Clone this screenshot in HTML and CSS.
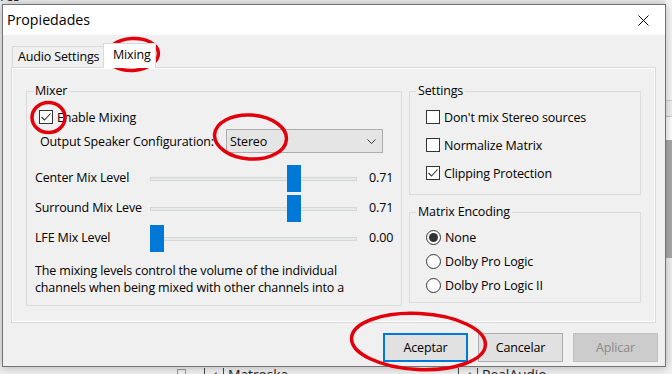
FILE: index.html
```html
<!DOCTYPE html>
<html lang="es">
<head>
<meta charset="utf-8">
<title>Propiedades</title>
<link rel="stylesheet" href="styles.css">
</head>
<body>
<div class="screen">
  <div class="backdrop">
    <span class="bg-frag bg-top">res</span>
    <div class="bg-right"></div>
    <span class="bg-frag bg-box1"></span>
    <span class="bg-frag bg-m"><span class="bg-chk">✓</span>Matroska</span>
    <span class="bg-frag bg-r"><span class="bg-chk">✓</span>RealAudio</span>
  </div>

  <div class="dialog">
    <div class="titlebar">
      <span class="title">Propiedades</span>
      <span class="close">
        <svg width="11" height="11" viewBox="0 0 11 11"><path d="M0.5 0.5 L10.5 10.5 M10.5 0.5 L0.5 10.5" stroke="#000" stroke-width="1" fill="none"/></svg>
      </span>
    </div>
    <div class="body">
      <div class="tabs">
        <div class="tab tab-audio">Audio Settings</div>
        <div class="tab tab-active">Mixing</div>
      </div>
      <div class="panel">
        <fieldset class="group mixer">
          <legend>Mixer</legend>
          <div class="check-row enable">
            <span class="box"><svg width="12" height="12" viewBox="0 0 12 12"><path d="M1.5 6 L4.5 9 L10.5 2.5" stroke="#333" stroke-width="1.1" fill="none"/></svg></span>
            <span>Enable Mixing</span>
          </div>
          <div class="combo-row">
            <span class="combo-label">Output Speaker Configuration:</span>
            <div class="combo">
              <span>Stereo</span>
              <svg width="9" height="5" viewBox="0 0 9 5"><path d="M0.5 0.5 L4.5 4.5 L8.5 0.5" stroke="#333" stroke-width="1" fill="none"/></svg>
            </div>
          </div>
          <div class="slider-row first">
            <span class="slider-label">Center Mix Level</span>
            <div class="track"><div class="track-line"></div><div class="thumb" style="left: calc(0.71 * (100% - 14px));"></div></div>
            <span class="slider-value">0.71</span>
          </div>
          <div class="slider-row">
            <span class="slider-label">Surround Mix Leve</span>
            <div class="track"><div class="track-line"></div><div class="thumb" style="left: calc(0.71 * (100% - 14px));"></div></div>
            <span class="slider-value">0.71</span>
          </div>
          <div class="slider-row">
            <span class="slider-label">LFE Mix Level</span>
            <div class="track"><div class="track-line"></div><div class="thumb" style="left: calc(0 * (100% - 14px));"></div></div>
            <span class="slider-value">0.00</span>
          </div>
          <p class="note">The mixing levels control the volume of the individual channels when being mixed with other channels into a single output speaker.</p>
        </fieldset>

        <div class="right-col">
          <fieldset class="group settings">
            <legend>Settings</legend>
            <div class="opt-row">
              <span class="box"></span><span>Don't mix Stereo sources</span>
            </div>
            <div class="opt-row">
              <span class="box"></span><span>Normalize Matrix</span>
            </div>
            <div class="opt-row">
              <span class="box"><svg width="12" height="12" viewBox="0 0 12 12"><path d="M1.5 6 L4.5 9 L10.5 2.5" stroke="#333" stroke-width="1.1" fill="none"/></svg></span><span>Clipping Protection</span>
            </div>
          </fieldset>
          <fieldset class="group matrix">
            <legend>Matrix Encoding</legend>
            <div class="radio-row">
              <span class="radio on"></span><span>None</span>
            </div>
            <div class="radio-row">
              <span class="radio"></span><span>Dolby Pro Logic</span>
            </div>
            <div class="radio-row">
              <span class="radio"></span><span>Dolby Pro Logic II</span>
            </div>
          </fieldset>
        </div>
      </div>
      <div class="buttons">
        <button class="btn btn-default">Aceptar</button>
        <button class="btn">Cancelar</button>
        <button class="btn btn-disabled">Aplicar</button>
      </div>
    </div>
  </div>

  <svg class="marks" width="672" height="374" viewBox="0 0 672 374">
    <ellipse cx="132.5" cy="54.5" rx="26" ry="16" transform="rotate(-4 132.5 54.5)"/>
    <ellipse cx="48.5" cy="117.5" rx="16.5" ry="15"/>
    <ellipse cx="250.5" cy="137" rx="36" ry="22" transform="rotate(4 250.5 137)"/>
    <ellipse cx="418.5" cy="341.5" rx="67" ry="28" transform="rotate(3 418.5 341.5)"/>
  </svg>
</div>
</body>
</html>
```

FILE: styles.css
```css
* { box-sizing: border-box; }
html, body { margin: 0; padding: 0; }
body {
  font-family: "Open Sans", "Noto Sans", sans-serif;
  font-stretch: 92%;
  font-size: 12.5px;
  letter-spacing: -0.15px;
  color: #000;
  background: #f0f0f0;
}

.screen {
  position: relative;
  width: 672px;
  height: 374px;
  overflow: hidden;
  background: #eeeeee;
}

/* application behind the dialog */
.backdrop { position: absolute; inset: 0; }
.bg-frag { position: absolute; font-size: 14px; line-height: 16px; color: #222; }
.bg-top { left: 0; top: -12px; }
.bg-right {
  position: absolute; left: 665px; top: 0; width: 7px; height: 374px;
  background: linear-gradient(to bottom, #f7f7f7 0 100px, #cfcfcf 100px 101px, #f0f0f0 101px 116px, #c4c4c4 116px 117px, #ffffff 117px 140px, #a9a9a9 140px 258px, #f0f0f0 258px);
}
.bg-box1 { left: 177px; top: 369px; width: 9px; height: 9px; border: 1px solid #9a9a9a; }
.bg-m { left: 204px; top: 367px; }
.bg-r { left: 458px; top: 367px; }
.bg-chk { display: inline-block; width: 20px; border-left: 1px solid #444; border-right: 1px solid #444; text-align: center; margin-right: 4px; font-size: 12px; }

/* dialog window */
.dialog {
  position: absolute;
  left: 2px; top: 4px;
  width: 664px; height: 363px;
  border: 1px solid #737373;
  background: #f0f0f0;
  display: flex;
  flex-direction: column;
  box-shadow: 0 0 9px rgba(0, 0, 0, 0.28);
}
.titlebar {
  height: 30px;
  flex: none;
  background: #fff;
  display: flex;
  align-items: center;
  justify-content: space-between;
}
.title { padding-left: 4px; font-size: 14.2px; letter-spacing: 0; line-height: 30px; }
.close {
  width: 44px; height: 30px;
  display: flex; align-items: center; justify-content: center;
}
.close svg { display: block; }

.body {
  flex: 1;
  padding: 8px 7px 0 8px;
  display: flex;
  flex-direction: column;
}

/* tabs */
.tabs {
  display: flex;
  align-items: flex-end;
  height: 24px;
  padding-left: 1px;
}
.tab {
  height: 21px;
  border: 1px solid #d9d9d9;
  border-bottom: none;
  background: #f0f0f0;
  padding: 0 0 0 5px;
  line-height: 19px;
  white-space: nowrap;
  overflow: hidden;
}
.tab-audio { width: 93px; }
.tab-active {
  width: 53px;
  height: 25px;
  margin-left: -2px;
  margin-bottom: -1px;
  padding-left: 9px;
  line-height: 21px;
  background: #fff;
  position: relative;
  z-index: 1;
}

/* tab page */
.panel {
  width: 645px;
  height: 256px;
  border: 1px solid #d9d9d9;
  box-shadow: inset 0 0 0 1px #fff;
  background: #f0f0f0;
  display: flex;
  gap: 7px;
  padding: 15px 14px 0 14px;
}

.group {
  margin: 0;
  min-width: 0;
  border: 1px solid #dcdcdc;
  padding: 0 0 0 8px;
  display: flex;
  flex-direction: column;
}
.group legend {
  padding: 0 2px;
  margin-left: -2px;
  line-height: 16px;
}

.mixer { width: 376px; height: 223px; flex: none; }

.box {
  width: 14px; height: 14px;
  border: 1px solid #333;
  background: #fff;
  display: flex; align-items: center; justify-content: center;
  flex: none;
}
.box svg { display: block; }

.check-row {
  display: flex; align-items: center; gap: 4px;
  height: 16px;
  margin-top: 10px;
  margin-left: 4px;
}

.combo-row {
  display: flex; align-items: center;
  height: 24px;
  margin-top: 4px;
  margin-left: 5px;
}
.combo-label { width: 186px; white-space: nowrap; }
.combo {
  width: 157px; height: 24px;
  border: 1px solid #adadad;
  background: #e5e5e5;
  display: flex; align-items: center; justify-content: space-between;
  padding: 0 6px 0 3px;
}
.combo svg { display: block; }

.slider-row {
  display: flex; align-items: center;
  height: 30px;
}
.slider-row.first { margin-top: 9px; }
.slider-label { width: 115px; white-space: nowrap; }
.track {
  position: relative;
  width: 207px; height: 30px;
  display: flex; align-items: center;
  padding-top: 3px;
}
.track-line {
  width: 100%; height: 4px;
  background: #e7eaea;
  border: 1px solid #d6d6d6;
}
.thumb {
  position: absolute;
  top: 3px;
  width: 14px; height: 27px;
  background: #0078d7;
}
.slider-value { margin-left: 12px; }

.note {
  margin: 10px 0 0 0;
  line-height: 17px;
  height: 37px;
  overflow: hidden;
  padding-right: 50px;
}

.right-col {
  width: 233px;
  display: flex;
  flex-direction: column;
}
.settings { height: 112px; padding-top: 4px; }
.matrix { height: 99px; margin-top: 9px; padding-top: 5px; }

.opt-row {
  display: flex; align-items: center; gap: 4px;
  height: 28px;
  margin-left: 8px;
}
.radio-row {
  display: flex; align-items: center; gap: 4px;
  height: 24px;
  margin-left: 8px;
}
.radio {
  width: 15px; height: 15px;
  border: 1px solid #333;
  border-radius: 50%;
  background: #fff;
  display: flex; align-items: center; justify-content: center;
  flex: none;
}
.radio.on::after {
  content: "";
  width: 9px; height: 9px;
  border-radius: 50%;
  background: #333;
}

/* buttons */
.buttons {
  display: flex;
  justify-content: flex-end;
  gap: 10px;
  margin-top: 10px;
}
.btn {
  width: 85px; height: 29px;
  font-family: inherit;
  font-stretch: inherit;
  font-size: 12.5px;
  letter-spacing: -0.15px;
  color: #000;
  background: #e1e1e1;
  border: 1px solid #adadad;
  padding: 0;
  margin: 0;
}
.btn-default {
  border-color: #0078d7;
  box-shadow: inset 0 0 0 1px #0078d7;
}
.btn-disabled {
  background: #cccccc;
  border-color: #bfbfbf;
  color: #8a8a8a;
}

/* red annotation marks */
.marks {
  position: absolute;
  left: 0; top: 0;
  pointer-events: none;
}
.marks ellipse {
  fill: none;
  stroke: #e2000c;
  stroke-width: 3.5;
}
```
